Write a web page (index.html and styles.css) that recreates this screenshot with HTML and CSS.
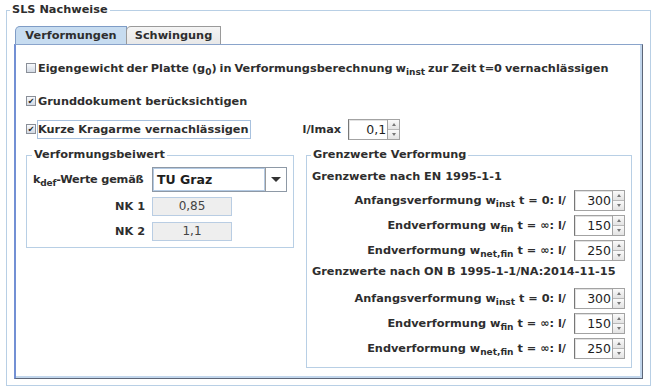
FILE: index.html
```html
<!DOCTYPE html>
<html lang="de">
<head>
    <meta charset="UTF-8">
    <title>SLS Nachweise</title>
    <link rel="stylesheet" href="styles.css">
</head>
<body>
    <fieldset class="group outer">
        <legend>SLS Nachweise</legend>

        <div class="tabs">
            <div class="tab active">Verformungen</div>
            <div class="tab">Schwingung</div>
        </div>

        <div class="tab-body">
            <!-- Options -->
            <div class="row row-1">
                <span class="check"></span>
                <span>Eigengewicht der Platte (g<sub>0</sub>) in Verformungsberechnung w<sub>inst</sub> zur Zeit t=0 vernachlässigen</span>
            </div>
            <div class="row row-2">
                <span class="check checked">&#10004;</span>
                <span>Grunddokument berücksichtigen</span>
            </div>
            <div class="row row-3">
                <span class="check checked">&#10004;</span>
                <span class="focused">Kurze Kragarme vernachlässigen</span>
                <span class="lmax">l/lmax</span>
                <div class="spinner">
                    <span class="value">0,1</span>
                    <span class="arrows"><i class="up"></i><i class="down"></i></span>
                </div>
            </div>

            <div class="columns">
                <!-- Verformungsbeiwert -->
                <fieldset class="group kdef">
                    <legend>Verformungsbeiwert</legend>
                    <div class="kdef-grid">
                        <span class="kdef-label">k<sub>def</sub>-Werte gemäß</span>
                        <div class="combo">
                            <span class="combo-text">TU Graz</span>
                            <span class="combo-btn"><i></i></span>
                        </div>
                        <span class="nk-label">NK 1</span>
                        <span class="nk-field">0,85</span>
                        <span class="nk-label">NK 2</span>
                        <span class="nk-field">1,1</span>
                    </div>
                </fieldset>

                <!-- Grenzwerte -->
                <fieldset class="group limits">
                    <legend>Grenzwerte Verformung</legend>
                    <div class="heading">Grenzwerte nach EN 1995-1-1</div>
                    <div class="limit">
                        <span>Anfangsverformung w<sub>inst</sub> t = 0: l/</span>
                        <div class="spinner"><span class="value">300</span><span class="arrows"><i class="up"></i><i class="down"></i></span></div>
                    </div>
                    <div class="limit">
                        <span>Endverformung w<sub>fin</sub> t = ∞: l/</span>
                        <div class="spinner"><span class="value">150</span><span class="arrows"><i class="up"></i><i class="down"></i></span></div>
                    </div>
                    <div class="limit">
                        <span>Endverformung w<sub>net,fin</sub> t = ∞: l/</span>
                        <div class="spinner"><span class="value">250</span><span class="arrows"><i class="up"></i><i class="down"></i></span></div>
                    </div>
                    <div class="heading second">Grenzwerte nach ON B 1995-1-1/NA:2014-11-15</div>
                    <div class="limit">
                        <span>Anfangsverformung w<sub>inst</sub> t = 0: l/</span>
                        <div class="spinner"><span class="value">300</span><span class="arrows"><i class="up"></i><i class="down"></i></span></div>
                    </div>
                    <div class="limit">
                        <span>Endverformung w<sub>fin</sub> t = ∞: l/</span>
                        <div class="spinner"><span class="value">150</span><span class="arrows"><i class="up"></i><i class="down"></i></span></div>
                    </div>
                    <div class="limit">
                        <span>Endverformung w<sub>net,fin</sub> t = ∞: l/</span>
                        <div class="spinner"><span class="value">250</span><span class="arrows"><i class="up"></i><i class="down"></i></span></div>
                    </div>
                </fieldset>
            </div>
        </div>
    </fieldset>
</body>
</html>
```

FILE: styles.css
```css
body {
    margin: 0;
    padding: 3px 0 0 6px;
    background: #fff;
    font-family: "DejaVu Sans", sans-serif;
    font-size: 11.3px;
    font-weight: bold;
    color: #2e2e2e;
}

sub {
    font-size: 9px;
    line-height: 0;
    vertical-align: -3px;
}

.group {
    box-sizing: border-box;
    margin: 0;
    border: 1px solid #b8cfe5;
}

.group legend {
    line-height: 14px;
    padding: 0 2px;
}

.outer {
    width: 645px;
    padding: 9px 7px 6px 7px;
}

.outer > legend {
    margin-left: -4px;
}

/* Tabs */
.tabs {
    display: flex;
    height: 18px;
    padding-left: 1px;
}

.tab {
    box-sizing: border-box;
    height: 18px;
    line-height: 17px;
    text-align: center;
    border: 1px solid #9a9a9a;
    border-bottom: none;
    border-radius: 5px 0 0 0;
    background: linear-gradient(#f4f4f4, #e8e8e8);
}

.tab.active {
    width: 112px;
    border-color: #7f9cc6;
    background: #c7dcf0;
}

.tab + .tab {
    margin-left: -1px;
    width: 95px;
}

.tab-body {
    height: 335px;
    box-sizing: border-box;
    padding: 14px 10px 0 10px;
    border-top: 1px solid #8aa4cb;
    border-left: 2px solid #7390d4;
    border-right: 1px solid #5d6678;
    border-bottom: 1px solid #5d6678;
    box-shadow: inset -2px -2px 0 #c2d6ec;
}

/* Option rows */
.row {
    display: flex;
    align-items: center;
    height: 18px;
    white-space: nowrap;
}

.row-1 { word-spacing: -1px; }
.row-2 { margin-top: 15px; }
.row-3 { margin-top: 9px; height: 20px; }

.check {
    box-sizing: border-box;
    width: 10px;
    height: 10px;
    margin-right: 2px;
    border: 1px solid #8a8f98;
    background: linear-gradient(#f7f9fc, #d3dae4);
    font-size: 8px;
    line-height: 9px;
    text-align: center;
    color: #222;
}

.focused {
    margin-left: -1px;
    border: 1px solid #a8c1de;
    padding: 0 1px 0 0;
    line-height: 17px;
}

.lmax {
    margin-left: 52px;
    margin-right: 7px;
}

/* Spinner */
.spinner {
    display: flex;
    width: 52px;
    height: 21px;
    box-sizing: border-box;
}

.spinner .value {
    flex: 1;
    border: 1px solid #a3a3a3;
    border-left-color: #777;
    box-shadow: inset 1px 1px 0 #e2e2e2;
    background: #fff;
    text-align: right;
    padding-right: 1px;
    font-weight: normal;
    font-size: 12.5px;
    line-height: 19px;
    color: #1e1e1e;
}

.spinner .arrows {
    display: flex;
    flex-direction: column;
    width: 11px;
    border: 1px solid #a3a3a3;
    border-left: none;
}

.spinner i {
    flex: 1;
    position: relative;
    background: linear-gradient(#fafafa, #e3e3e3);
}

.spinner i.up { border-bottom: 1px solid #b8b8b8; }

.spinner i::after {
    content: "";
    position: absolute;
    left: 4px;
    top: 3px;
    border-left: 2px solid transparent;
    border-right: 2px solid transparent;
}

.spinner i.up::after { border-bottom: 3px solid #777; }
.spinner i.down::after { border-top: 3px solid #777; }

/* Bottom groups */
.columns {
    display: flex;
    align-items: flex-start;
    gap: 12px;
    margin-top: 9px;
}

.kdef {
    width: 268px;
    padding: 5px 6px 6px 6px;
}

.kdef legend,
.limits legend {
    margin-left: -1px;
}

.kdef-grid {
    display: grid;
    grid-template-columns: 114px 135px;
    column-gap: 5px;
    row-gap: 5px;
    align-items: center;
    white-space: nowrap;
}

.kdef-label {
    letter-spacing: -0.2px;
}

.kdef-grid > :nth-child(5),
.kdef-grid > :nth-child(6) {
    margin-top: 1px;
}

.nk-label {
    text-align: right;
    padding-right: 2px;
}

.combo {
    display: flex;
    height: 25px;
    box-sizing: border-box;
    border: 1px solid #8e99a6;
}

.combo-text {
    flex: 1;
    border: 1px solid #b4cae3;
    padding-left: 3px;
    font-size: 12.5px;
    line-height: 21px;
    color: #1e1e1e;
}

.combo-btn {
    width: 20px;
    border-left: 1px solid #9a9a9a;
    background: #fff;
    position: relative;
}

.combo-btn i {
    position: absolute;
    left: 5px;
    top: 9px;
    border-left: 5px solid transparent;
    border-right: 5px solid transparent;
    border-top: 5px solid #333;
}

.nk-field {
    width: 80px;
    height: 19px;
    box-sizing: border-box;
    border: 1px solid #b9cde3;
    background: #eee;
    text-align: center;
    font-weight: normal;
    font-size: 12px;
    line-height: 17px;
    color: #444;
}

.limits {
    width: 326px;
    padding: 6px 6px 8px 5px;
}

.heading {
    height: 18px;
    line-height: 18px;
    white-space: nowrap;
}

.heading.second {
    margin-top: 2px;
}

.limit {
    display: flex;
    justify-content: flex-end;
    align-items: center;
    gap: 8px;
    margin-top: 4px;
    white-space: nowrap;
}

.heading.second + .limit {
    margin-top: 7px;
}

.limit .spinner {
    width: 51px;
}
```
